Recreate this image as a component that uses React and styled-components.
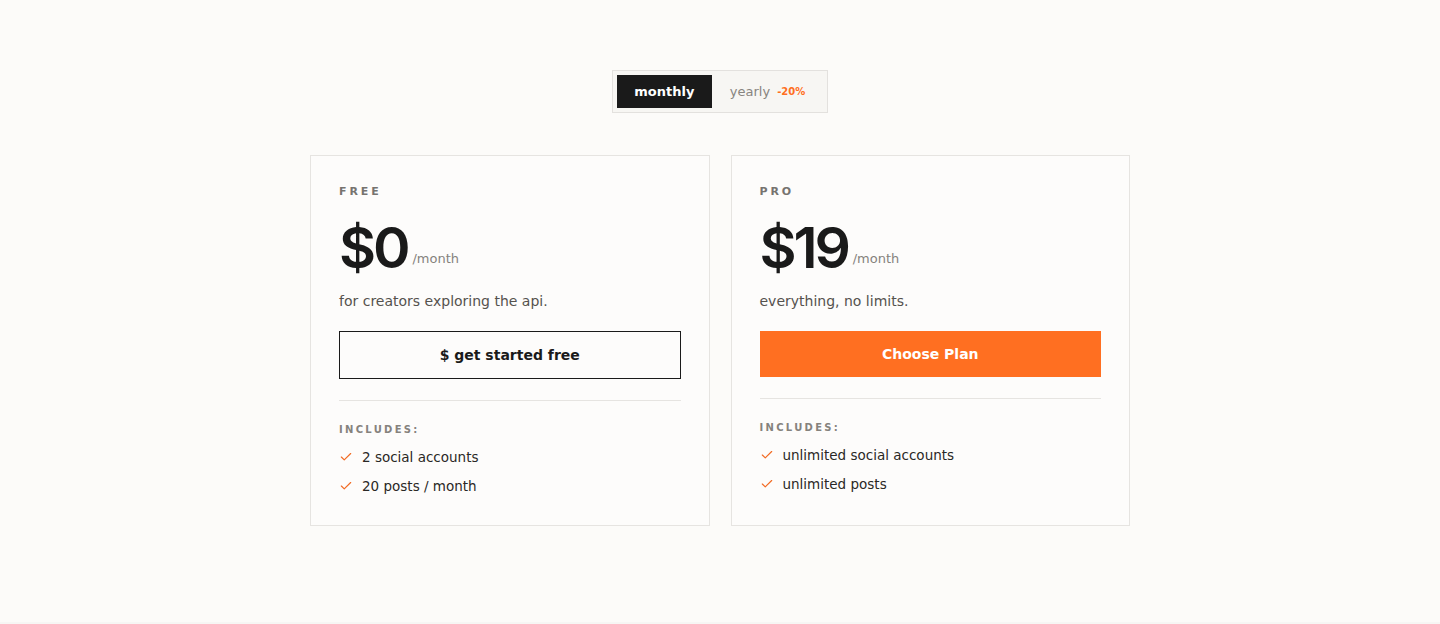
import React, { useState } from 'react'
import styled, { createGlobalStyle } from 'styled-components'
import { Check } from 'lucide-react'

const GlobalStyle = createGlobalStyle`
  html, body {
    margin: 0;
    padding: 0;
    background: #f7f6f4;
  }
  body {
    font-family: "DejaVu Sans", sans-serif;
    color: #1a1a1a;
  }
`

const Page = styled.main`
  min-height: 622px;
  background: #fcfbf9;
  display: flex;
  flex-direction: column;
  align-items: center;
  padding-top: 70px;
  box-sizing: border-box;
`

const Toggle = styled.div`
  display: flex;
  padding: 4px;
  border: 1px solid #e3e1de;
  background: #f7f6f3;
`

const ToggleButton = styled.button`
  display: flex;
  align-items: center;
  gap: 7px;
  height: 33px;
  padding: 0 ${p => (p.active ? '17.5px' : '18px')};
  border: none;
  font-family: "DejaVu Sans", sans-serif;
  font-size: 13px;
  font-weight: ${p => (p.active ? 700 : 400)};
  background: ${p => (p.active ? '#1a1a1a' : 'transparent')};
  color: ${p => (p.active ? '#ffffff' : '#888580')};
  cursor: pointer;
`

const Discount = styled.span`
  font-size: 10px;
  font-weight: 700;
  color: #ff6f21;
`

const Cards = styled.div`
  display: grid;
  grid-template-columns: 1fr 1fr;
  width: 820px;
  gap: 21px;
  margin-top: 42px;
`

const Card = styled.section`
  border: 1px solid #e6e4e1;
  background: #fdfcfb;
  padding: 28px 28px 29px;
  display: flex;
  flex-direction: column;
`

const Tier = styled.h3`
  margin: 0;
  font-size: 11px;
  font-weight: 700;
  letter-spacing: 2.9px;
  color: #76736f;
  line-height: 16px;
`

const PriceRow = styled.div`
  display: flex;
  align-items: flex-end;
  gap: 5px;
  margin-top: 18px;
`

const Amount = styled.span`
  font-family: Inter, "Liberation Sans", sans-serif;
  font-size: 57px;
  font-weight: 600;
  letter-spacing: -0.055em;
  line-height: 60px;
  color: #1a1a1a;
`

const Period = styled.span`
  font-size: 13px;
  line-height: 16px;
  margin-bottom: 11px;
  color: #85827d;
`

const Blurb = styled.p`
  margin: 13px 0 0;
  font-size: 14px;
  line-height: 20px;
  color: #55524e;
`

const PlanButton = styled.button`
  margin-top: 20px;
  height: ${p => (p.primary ? '46px' : '48px')};
  border: ${p => (p.primary ? 'none' : '1px solid #1a1a1a')};
  background: ${p => (p.primary ? '#ff6f21' : 'transparent')};
  color: ${p => (p.primary ? '#ffffff' : '#1a1a1a')};
  font-family: "DejaVu Sans", sans-serif;
  font-size: 14px;
  font-weight: 700;
  cursor: pointer;
`

const Divider = styled.hr`
  margin: 21px 0 0;
  border: none;
  border-top: 1px solid #e6e4e1;
`

const Includes = styled.h4`
  margin: 22px 0 0;
  font-size: 10px;
  font-weight: 700;
  letter-spacing: 2.3px;
  color: #85827d;
  line-height: 14px;
`

const Features = styled.ul`
  list-style: none;
  margin: 10px 0 0;
  padding: 0;
  display: flex;
  flex-direction: column;
  gap: 9px;
`

const Feature = styled.li`
  display: flex;
  align-items: center;
  gap: 9px;
  font-size: 13.5px;
  line-height: 20px;
  color: #2a2825;
  svg {
    color: #f26a22;
    flex-shrink: 0;
  }
`

const plans = [
  {
    tier: 'FREE',
    price: '$0',
    blurb: 'for creators exploring the api.',
    cta: '$ get started free',
    features: ['2 social accounts', '20 posts / month']
  },
  {
    tier: 'PRO',
    price: '$19',
    blurb: 'everything, no limits.',
    cta: 'Choose Plan',
    primary: true,
    features: ['unlimited social accounts', 'unlimited posts']
  }
]

export default function App() {
  const [billing, setBilling] = useState('monthly')

  return (
    <>
      <GlobalStyle />
      <Page>
        <Toggle>
          <ToggleButton active={billing === 'monthly'} onClick={() => setBilling('monthly')}>
            monthly
          </ToggleButton>
          <ToggleButton active={billing === 'yearly'} onClick={() => setBilling('yearly')}>
            yearly <Discount>-20%</Discount>
          </ToggleButton>
        </Toggle>
        <Cards>
          {plans.map(plan => (
            <Card key={plan.tier}>
              <Tier>{plan.tier}</Tier>
              <PriceRow>
                <Amount>{plan.price}</Amount>
                <Period>/month</Period>
              </PriceRow>
              <Blurb>{plan.blurb}</Blurb>
              <PlanButton primary={plan.primary}>{plan.cta}</PlanButton>
              <Divider />
              <Includes>INCLUDES:</Includes>
              <Features>
                {plan.features.map(f => (
                  <Feature key={f}>
                    <Check size={14} strokeWidth={2} />
                    {f}
                  </Feature>
                ))}
              </Features>
            </Card>
          ))}
        </Cards>
      </Page>
    </>
  )
}
